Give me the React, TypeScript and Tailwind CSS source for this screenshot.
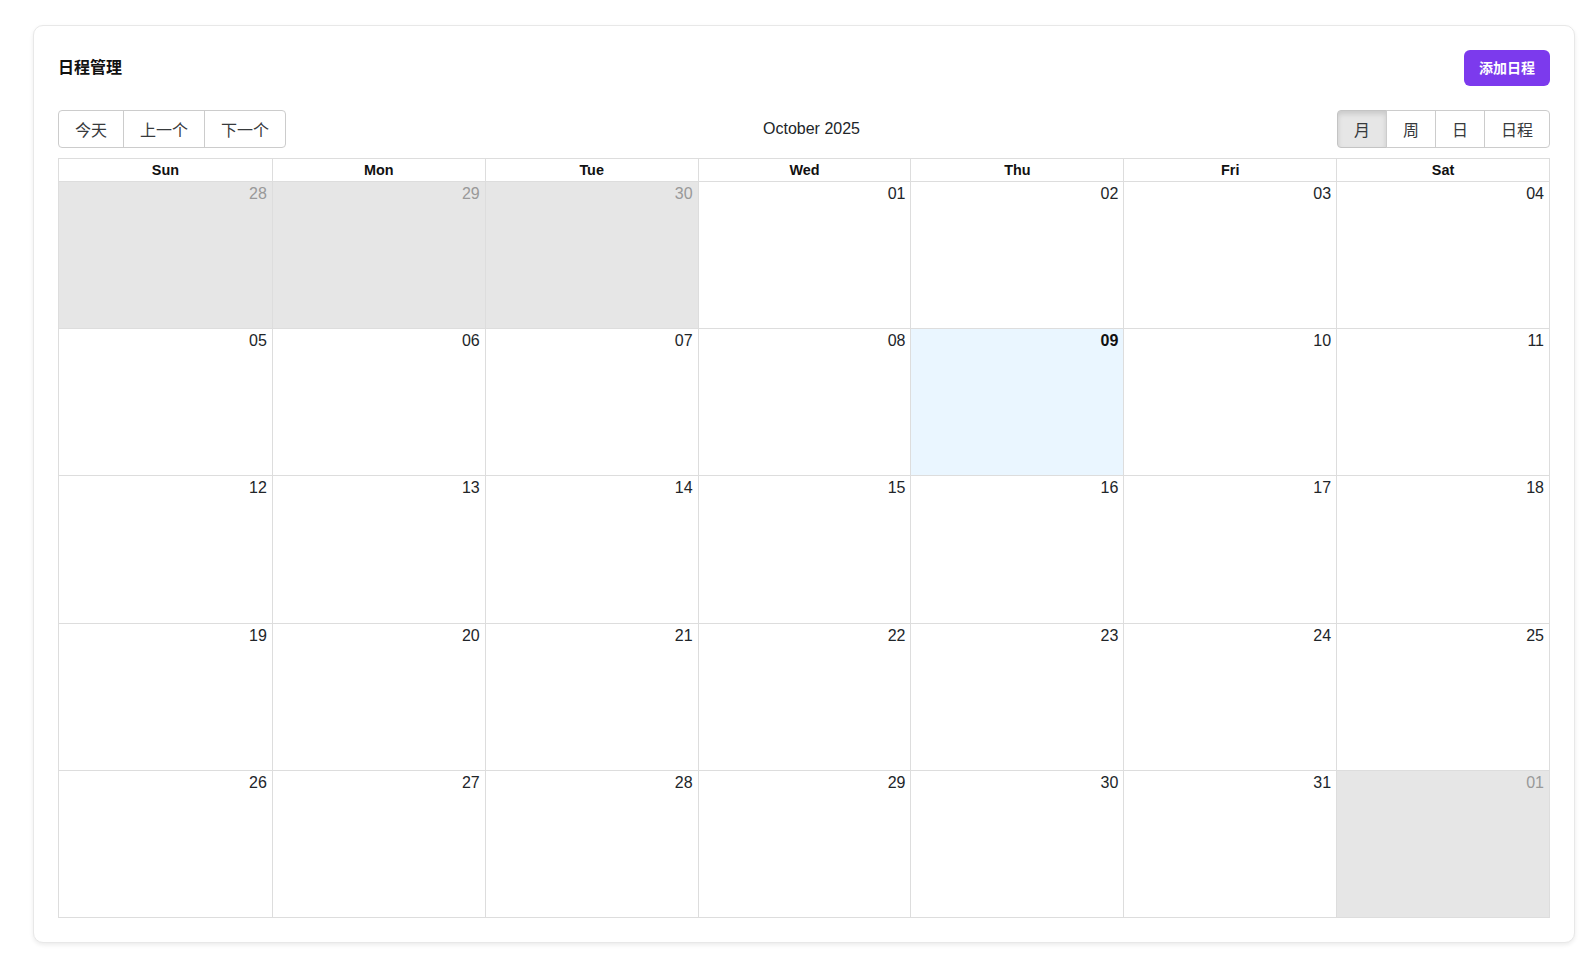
const DAYS = ['Sun', 'Mon', 'Tue', 'Wed', 'Thu', 'Fri', 'Sat']

type Cell = { label: string; off?: boolean; today?: boolean }

function buildWeeks(): Cell[][] {
  const cells: Cell[] = [
    { label: '28', off: true },
    { label: '29', off: true },
    { label: '30', off: true },
  ]
  for (let d = 1; d <= 31; d++) {
    cells.push({ label: String(d).padStart(2, '0'), today: d === 9 })
  }
  cells.push({ label: '01', off: true })
  const weeks: Cell[][] = []
  for (let i = 0; i < cells.length; i += 7) weeks.push(cells.slice(i, i + 7))
  return weeks
}

export default function App() {
  const weeks = buildWeeks()

  return (
    <div className="min-h-screen bg-white pl-[33px] pt-[25px] font-['Liberation_Sans','Noto_Sans_CJK_SC',sans-serif] text-[#212529]">
      <div className="w-[1542px] h-[918px] rounded-[10px] border border-[#e8e8e8] bg-white p-6 shadow-[0_2px_4px_rgba(0,0,0,0.08)] flex flex-col">

        {/* Header */}
        <div className="flex items-center justify-between h-9">
          <h1 className="text-[16px] font-bold text-[#111]">日程管理</h1>
          <button className="h-9 w-[86px] rounded-md bg-[#7c3aed] text-white text-[14px] font-bold">添加日程</button>
        </div>

        {/* Toolbar */}
        <div className="mt-6 mb-[10px] flex items-center">
          <div className="flex">
            {['今天', '上一个', '下一个'].map((t, i) => (
              <button
                key={t}
                className={`h-[38px] px-4 pt-1 border border-[#ccc] text-[16px] text-[#373a3c] ${i === 0 ? 'rounded-l' : '-ml-px'} ${i === 2 ? 'rounded-r' : ''}`}
              >
                {t}
              </button>
            ))}
          </div>
          <span className="flex-1 text-center text-[16px] text-[#212529]">October 2025</span>
          <div className="flex">
            {['月', '周', '日', '日程'].map((t, i) => (
              <button
                key={t}
                className={`h-[38px] px-4 pt-1 border text-[16px] text-[#373a3c] ${i === 0 ? 'rounded-l bg-[#e6e6e6] border-[#c4c4c4] shadow-[inset_0_3px_5px_rgba(0,0,0,0.125)]' : '-ml-px border-[#ccc]'} ${i === 3 ? 'rounded-r' : ''}`}
              >
                {t}
              </button>
            ))}
          </div>
        </div>

        {/* Month grid */}
        <div className="flex-1 flex flex-col border border-[#ddd]">
          <div className="grid grid-cols-7 h-[23px] border-b border-[#ddd]">
            {DAYS.map((d, i) => (
              <div key={d} className={`flex items-center justify-center pt-px text-[14.4px] font-bold text-[#111] ${i > 0 ? 'border-l border-[#ddd]' : ''}`}>
                {d}
              </div>
            ))}
          </div>
          {weeks.map((week, wi) => (
            <div key={wi} className={`flex-1 grid grid-cols-7 ${wi > 0 ? 'border-t border-[#ddd]' : ''}`}>
              {week.map((c, ci) => (
                <div
                  key={ci}
                  className={`pr-[5px] text-right text-[16px] ${ci > 0 ? 'border-l border-[#ddd]' : ''} ${c.off ? 'bg-[#e6e6e6] text-[#999]' : c.today ? 'bg-[#eaf6ff] text-[#111] font-bold' : 'text-[#212529]'}`}
                >
                  {c.label}
                </div>
              ))}
            </div>
          ))}
        </div>

      </div>
    </div>
  )
}
